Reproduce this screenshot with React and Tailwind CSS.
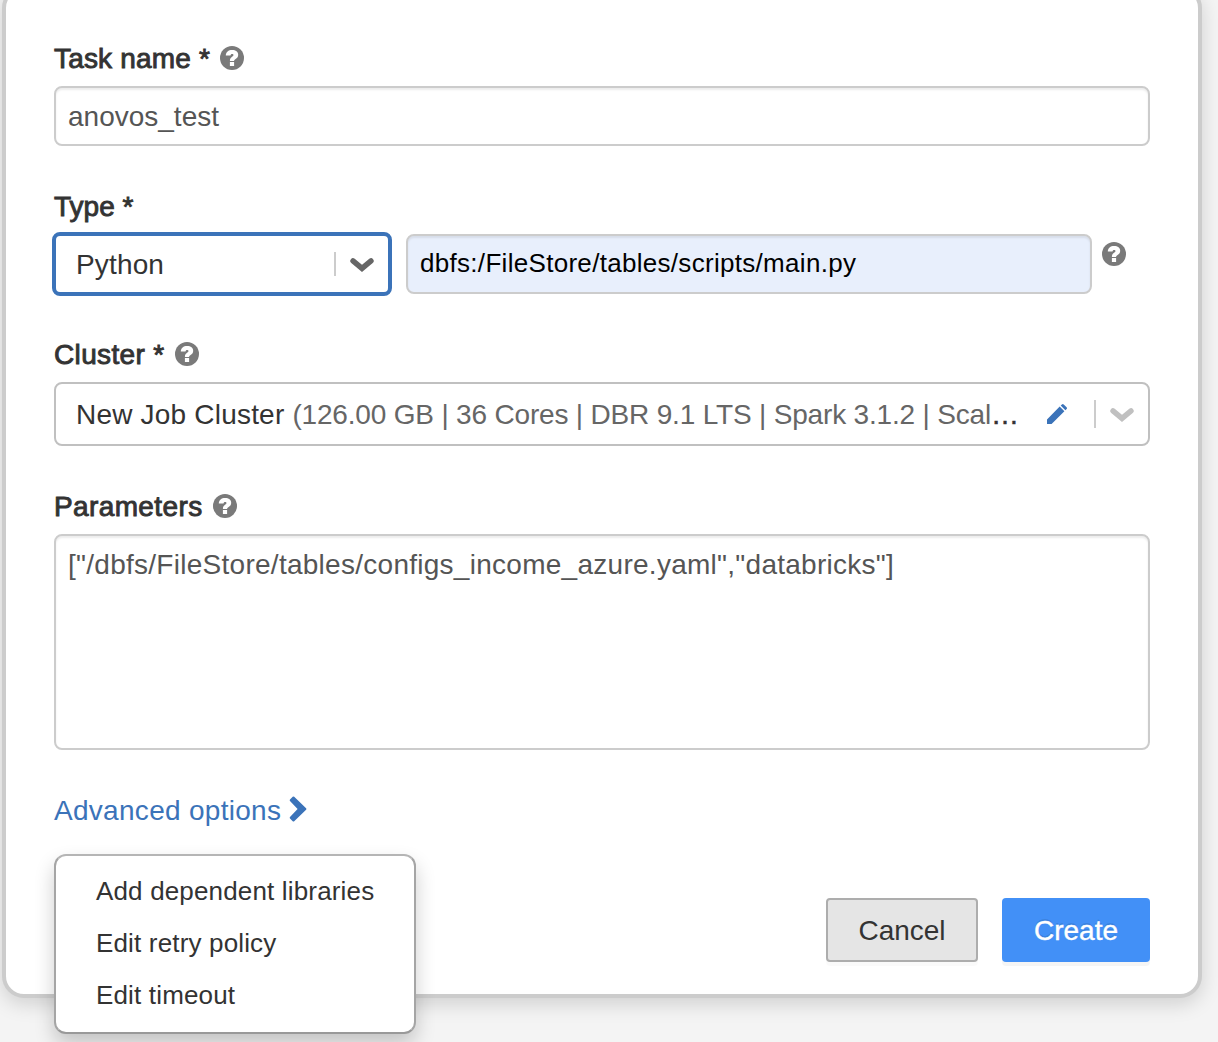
function HelpIcon({ className = "" }) {
  return (
    <svg className={`size-6 shrink-0 ${className}`} viewBox="0 0 24 24" fill="none">
      <circle cx="12" cy="12" r="12" fill="#7a7a7a" />
      <path d="M5.800 9.500C5.900 5.800 8.400 3.900 12.100 3.900c3.700 0 6.100 1.900 6.100 4.800 0 2.300-1.200 3.400-2.600 4.300-1 .7-1.500 1-1.500 2h-4.200c0-2.700 1-3.500 2.200-4.300 1-.7 1.400-1 1.400-1.700 0-.7-.5-1.100-1.400-1.100-1 0-1.500.5-1.600 1.600z" fill="#fff" />
      <rect x="9.900" y="16" width="4.200" height="4" fill="#fff" />
    </svg>
  );
}

function ChevronDown({ className }) {
  return (
    <svg className={`mt-[2px] h-[14px] w-6 shrink-0 ${className}`} viewBox="0 0 24 14" fill="none" stroke="currentColor">
      <path d="M3 2.900 12 10.400 21 2.900" strokeWidth="5.400" strokeLinecap="round" strokeLinejoin="miter" />
    </svg>
  );
}

function Label({ children, help, className = "" }) {
  return (
    <div className={`flex h-10 items-center pt-[2px] text-[28px] leading-[38px] text-[#333] [-webkit-text-stroke:0.9px_#333] ${className}`}>
      <span className="whitespace-nowrap">{children}</span>
      {help && <HelpIcon className="-mt-[2px] ml-[10px]" />}
    </div>
  );
}

export default function App() {
  return (
    <div className="h-[1042px] overflow-hidden bg-[#f4f4f4] font-['Liberation_Sans',Arial,sans-serif] text-[28px] text-[#333]">
      <main className="relative -mt-[14px] ml-[2px] h-[1012px] w-[1200px] rounded-[22px] border-4 border-[#ccc] bg-white px-12 pt-12 shadow-[0_6px_20px_rgba(0,0,0,0.15)]">
        <Label help className="tracking-[0.18px]">Task name *</Label>
        <div className="mt-2 flex h-[60px] items-center rounded-lg border-2 border-[#ccc] px-3 pt-[2px] text-[#555] shadow-[inset_0_2px_2px_rgba(0,0,0,0.075)]">
          <span className="whitespace-nowrap">anovos_test</span>
        </div>

        <Label className="mt-10">Type *</Label>
        <div className="mt-[6px] flex h-16 items-start">
          <div className="-ml-[2px] flex h-16 w-[340px] items-center rounded-lg border-4 border-[#3b73b9] pl-5 pr-[14px]">
            <span className="flex-1 pt-[2px] tracking-[0.15px]">Python</span>
            <span className="mr-[14px] h-6 w-[2px] bg-[#ccc]" />
            <ChevronDown className="text-[#666]" />
          </div>
          <div className="ml-[14px] mt-[2px] flex h-[60px] w-[686px] items-center rounded-lg border-2 border-[#ccc] bg-[#e8effc] px-3 pb-[2px] text-[26px] tracking-[0.3px] text-black shadow-[inset_0_2px_2px_rgba(0,0,0,0.075)]">
            <span className="whitespace-nowrap">dbfs:/FileStore/tables/scripts/main.py</span>
          </div>
          <HelpIcon className="ml-[10px] mt-[10px]" />
        </div>

        <Label help className="mt-[38px] tracking-[0.35px]">Cluster *</Label>
        <div className="mt-2 flex h-16 items-center rounded-lg border-2 border-[#c0c0c0] pl-5 pr-[14px]">
          <div className="flex w-[971px] whitespace-nowrap pt-[2px]">
            <span className="tracking-[0.2px]">New Job Cluster&nbsp;</span>
            <span className="tracking-[-0.18px] text-[#666]">(126.00 GB | 36 Cores | DBR 9.1 LTS | Spark 3.1.2 | Scal</span>
            <span className="[-webkit-text-stroke:0.5px_#333]">…</span>
          </div>
          <svg className="-mt-px h-5 w-5 shrink-0" viewBox="0 0 20 20" fill="#3b73b9">
            <path d="M0 20v-4.600L12.700 2.600l4.700 4.700L4.600 20zM13.700 1.600 14.900.4q.9-.8 1.800 0l2.900 2.900q.8.900 0 1.800l-1.200 1.200z" />
          </svg>
          <span className="ml-[27px] mr-[14px] h-7 w-[2px] bg-[#ccc]" />
          <ChevronDown className="text-[#c0c0c0]" />
        </div>

        <Label help className="mt-10 tracking-[0.38px]">Parameters</Label>
        <div className="mt-2 h-[216px] rounded-lg border-2 border-[#ccc] px-3 pt-[9px] leading-10 tracking-[0.27px] text-[#555] shadow-[inset_0_2px_2px_rgba(0,0,0,0.075)]">
          <span className="whitespace-nowrap">["/dbfs/FileStore/tables/configs_income_azure.yaml","databricks"]</span>
        </div>

        <div className="mt-10 flex h-10 items-center leading-10 text-[#3b73b9]">
          <span className="whitespace-nowrap pt-[2px] tracking-[0.29px]">Advanced options</span>
          <svg className="-mt-[2px] ml-2 h-[26px] w-[18px]" viewBox="0 0 18 26" fill="currentColor">
            <path d="M1 4.900q-.7-.7 0-1.400L3.700.8q.8-.7 1.500 0L17.100 12.300q.7.700 0 1.400L5.200 25.200q-.7.700-1.500 0L1 22.500q-.7-.7 0-1.400L8.600 13z" />
          </svg>
        </div>

        <div className="mt-[68px] flex h-16 justify-end gap-6">
          <button className="w-[152px] rounded-[4px] border-2 border-[#adadad] bg-[#e5e5e5] pt-[2px] shadow-[0_4px_0_rgba(0,0,0,0.02)]">Cancel</button>
          <button className="w-[148px] rounded-[4px] bg-[#4290f7] pt-[2px] text-white shadow-[0_4px_0_rgba(0,0,0,0.04)] [-webkit-text-stroke:0.4px_white] [text-shadow:0_-2px_0_rgba(0,0,0,0.1)]">Create</button>
        </div>

        <ul className="absolute left-12 top-[864px] h-[180px] w-[362px] rounded-xl border-2 border-x-[#a5a5a5] border-b-[#999] border-t-[#b5b5b5] bg-white py-[9px] pl-10 text-[26px] leading-[52px] tracking-[0.16px] shadow-[0_10px_20px_rgba(0,0,0,0.2)]">
          <li className="whitespace-nowrap">Add dependent libraries</li>
          <li className="whitespace-nowrap">Edit retry policy</li>
          <li className="whitespace-nowrap">Edit timeout</li>
        </ul>
      </main>
    </div>
  );
}
